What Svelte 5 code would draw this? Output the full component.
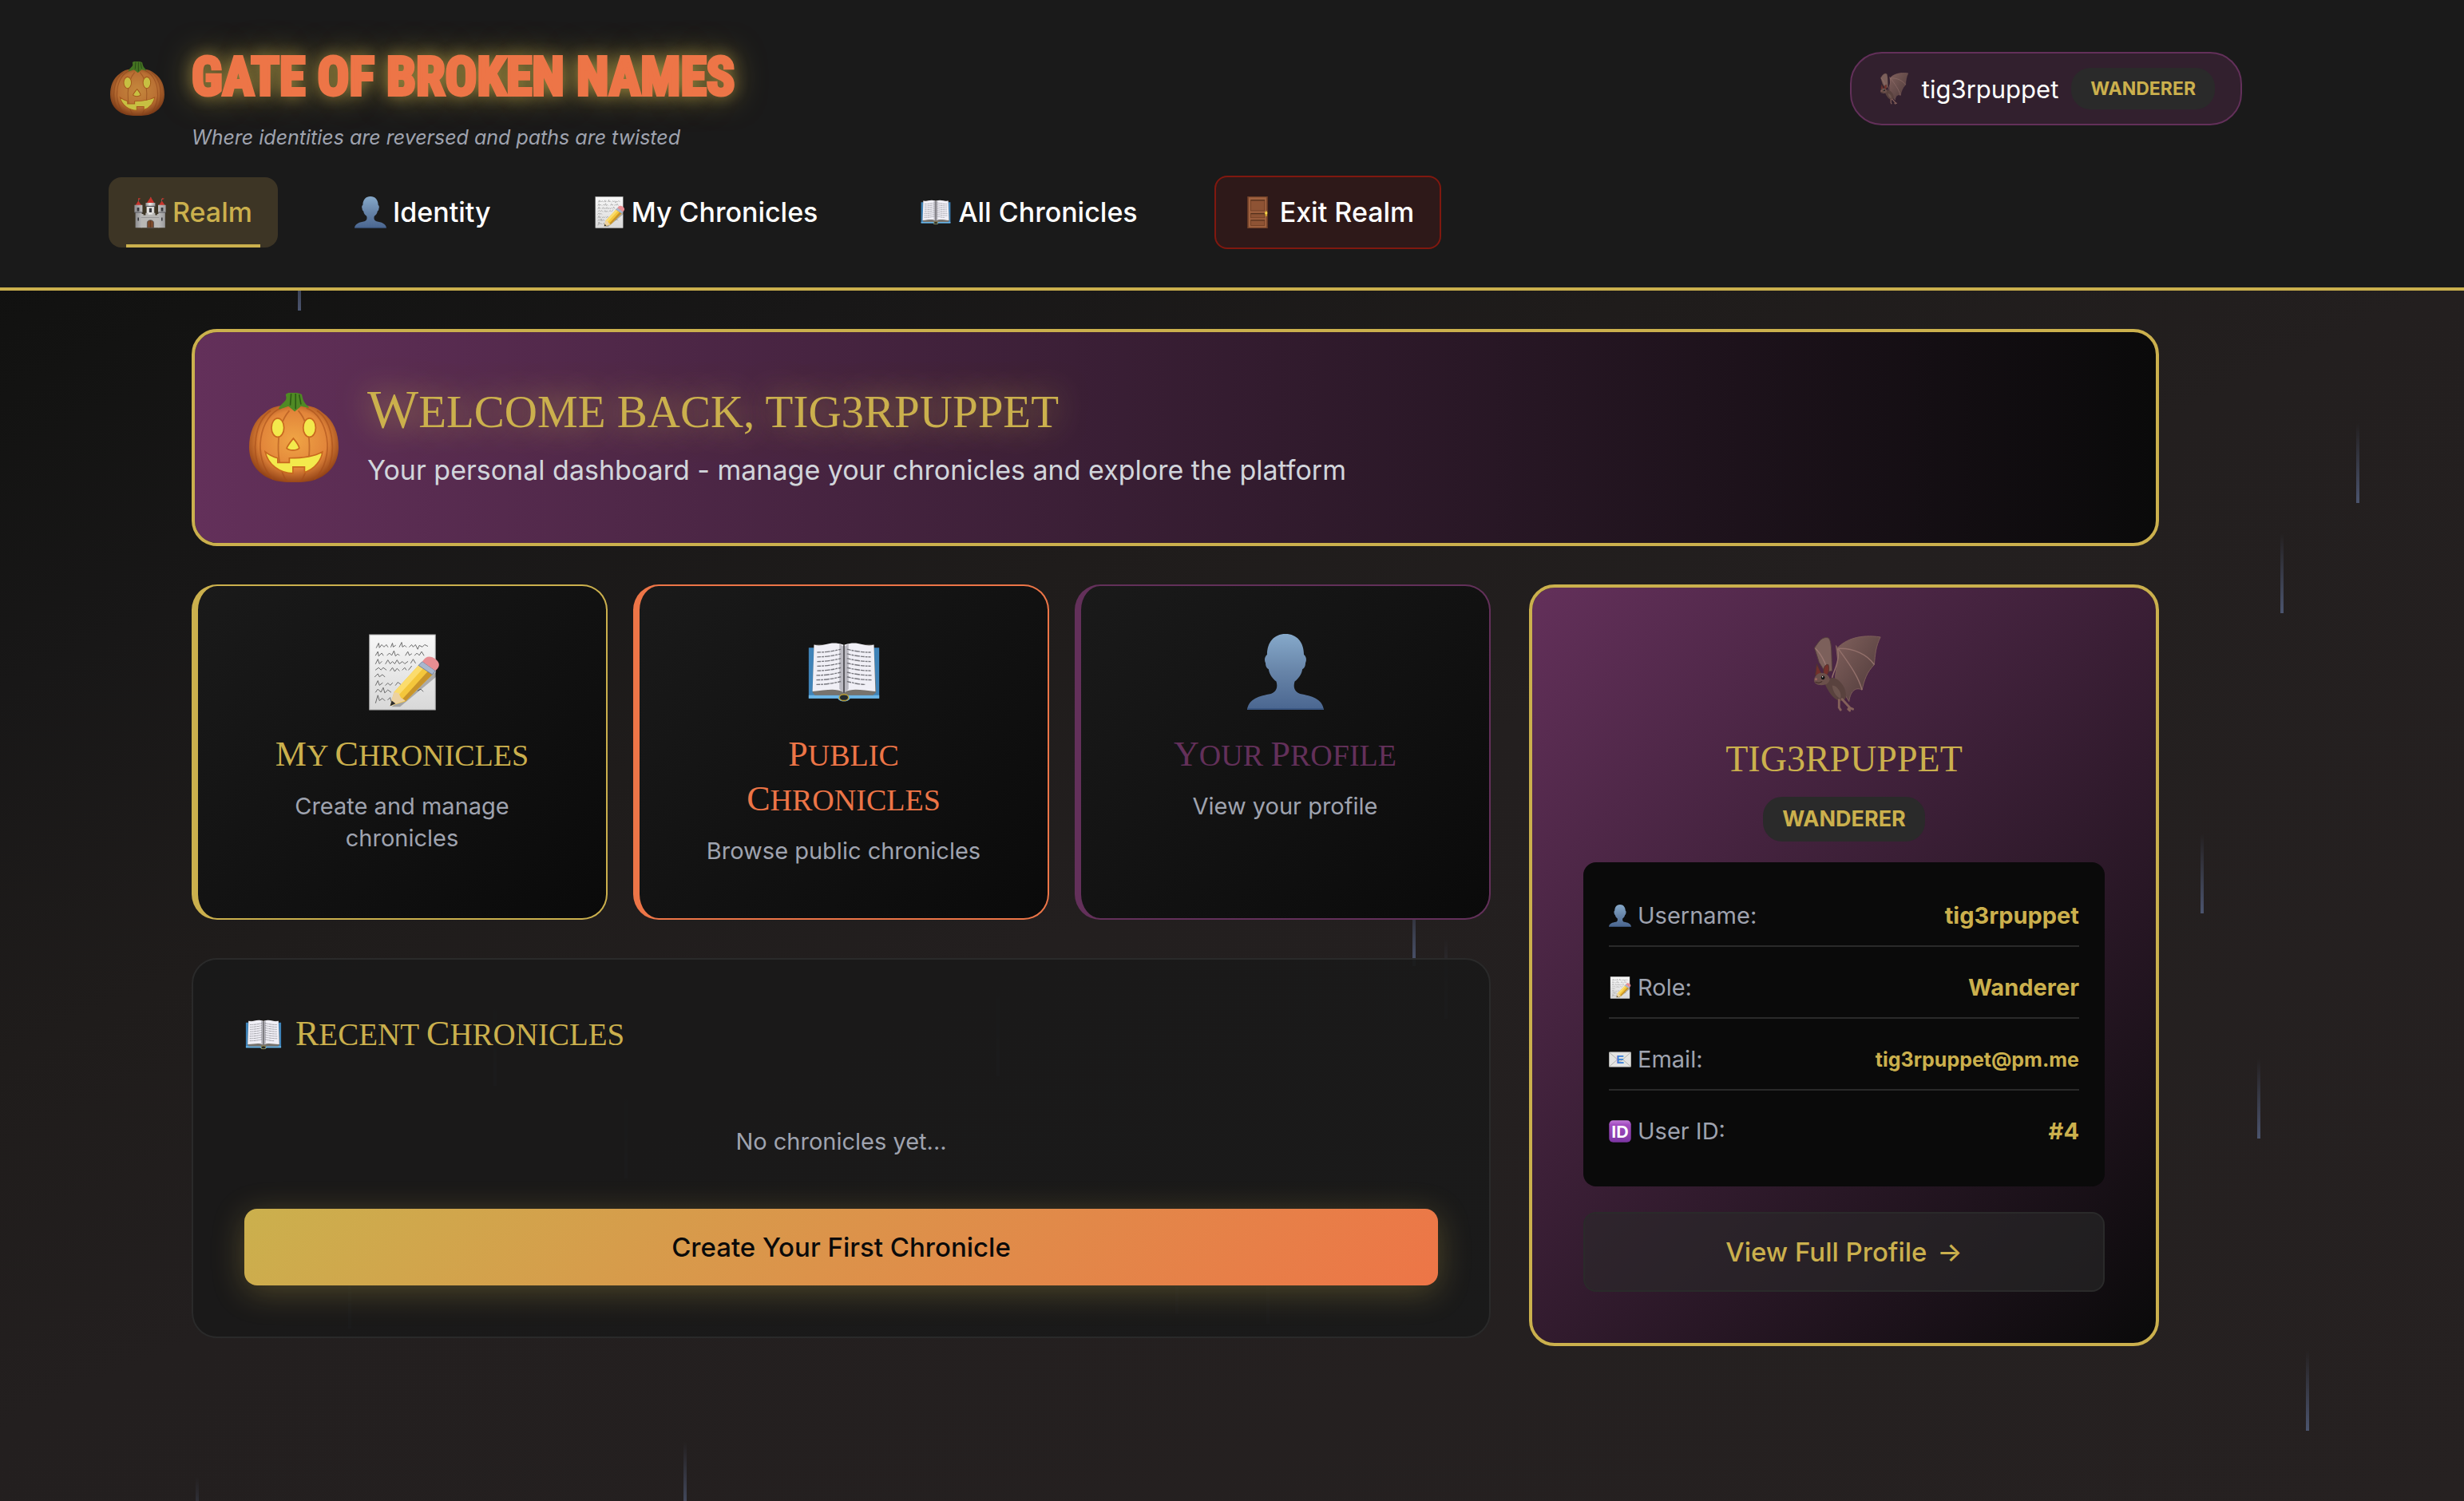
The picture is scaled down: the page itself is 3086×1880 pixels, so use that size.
<script lang="ts">
  type Drop = { x: number; y: number; faint?: boolean };

  const user = {
    name: "tig3rpuppet",
    role: "Wanderer",
    email: "tig3rpuppet@pm.me",
    id: 4
  };

  const nav = [
    { icon: "castle", label: "Realm", href: "#realm", kind: "active" },
    { icon: "bust", label: "Identity", href: "#identity", kind: "" },
    { icon: "memo", label: "My Chronicles", href: "#mine", kind: "" },
    { icon: "book", label: "All Chronicles", href: "#all", kind: "" },
    { icon: "door", label: "Exit Realm", href: "#exit", kind: "exit" }
  ];

  const cards = [
    { icon: "memo", title: "My Chronicles", text: "Create and manage chronicles", tone: "gold", href: "#mine" },
    { icon: "book", title: "Public Chronicles", text: "Browse public chronicles", tone: "orange", href: "#all" },
    { icon: "bust", title: "Your Profile", text: "View your profile", tone: "purple", href: "#identity" }
  ];

  const details = [
    { icon: "bust", label: "Username:", value: user.name, small: false },
    { icon: "memo", label: "Role:", value: user.role, small: false },
    { icon: "mail", label: "Email:", value: user.email, small: true },
    { icon: "id", label: "User ID:", value: `#${user.id}`, small: false }
  ];

  const drops: Drop[] = [
    { x: 373, y: 289 },
    { x: 2951, y: 530 },
    { x: 2856, y: 668 },
    { x: 2756, y: 1044 },
    { x: 2827, y: 1326 },
    { x: 2888, y: 1692 },
    { x: 1769, y: 1110 },
    { x: 856, y: 1806 },
    { x: 245, y: 1850 },
    { x: 1809, y: 1176, faint: true },
    { x: 1248, y: 1248, faint: true },
    { x: 618, y: 1260, faint: true },
    { x: 782, y: 1376, faint: true },
    { x: 436, y: 1564, faint: true },
    { x: 1472, y: 1546, faint: true },
    { x: 1586, y: 1558, faint: true }
  ];
</script>

{#snippet icon(name: string)}
  <svg class="icon" viewBox="0 0 100 100" aria-hidden="true"><use href="#i-{name}" /></svg>
{/snippet}

{#snippet caps(text: string)}
  {#each text.split(/([A-Z])/) as part}{#if /^[A-Z]$/.test(part)}<span class="initial">{part}</span>{:else}{part}{/if}{/each}
{/snippet}

<div class="page">
  <!-- shared artwork -->
  <svg class="defs" width="0" height="0" aria-hidden="true">
    <defs>
      <radialGradient id="g-pumpkin" cx="50%" cy="45%" r="58%">
        <stop offset="0" stop-color="#f0a545" />
        <stop offset="0.65" stop-color="#e2853a" />
        <stop offset="1" stop-color="#8c3d14" />
      </radialGradient>
      <linearGradient id="g-bust" x1="0" y1="0" x2="0" y2="1">
        <stop offset="0" stop-color="#86a9ca" />
        <stop offset="0.5" stop-color="#6784a8" />
        <stop offset="1" stop-color="#4a6690" />
      </linearGradient>
      <linearGradient id="g-paper" x1="0" y1="0" x2="0" y2="1">
        <stop offset="0" stop-color="#f8f8f8" />
        <stop offset="1" stop-color="#d8d8d8" />
      </linearGradient>
      <linearGradient id="g-wing" x1="0" y1="0" x2="1" y2="1">
        <stop offset="0" stop-color="#80605c" />
        <stop offset="1" stop-color="#4c3838" />
      </linearGradient>
      <linearGradient id="g-stone" x1="0" y1="0" x2="1" y2="0">
        <stop offset="0" stop-color="#8d8d90" />
        <stop offset="0.45" stop-color="#ecebe8" />
        <stop offset="1" stop-color="#9a9a9c" />
      </linearGradient>
      <linearGradient id="g-id" x1="0" y1="0" x2="0" y2="1">
        <stop offset="0" stop-color="#c27ad8" />
        <stop offset="0.2" stop-color="#a24cc0" />
        <stop offset="1" stop-color="#7d35a4" />
      </linearGradient>

      <symbol id="i-pumpkin" viewBox="0 0 100 100">
        <path d="M50 17C40 12 27 14 18 22C5 31 0 45 0 61C0 78 10 92 26 97C34 101 66 101 74 97C90 92 100 78 100 61C100 45 95 31 82 22C73 14 60 12 50 17Z" fill="url(#g-pumpkin)" />
        <g fill="none" stroke="#a44b18" stroke-opacity=".55" stroke-width="1.6">
          <path d="M36 17C12 25 2 72 27 97M64 17C88 25 98 72 73 97" />
          <path d="M24 20C6 32 2 66 13 88M76 20C94 32 98 66 87 88" />
          <path d="M45 20C29 38 29 78 42 99M55 20C71 38 71 78 58 99" />
        </g>
        <path d="M33 18C34 14 39 11 41 8C43 3 38 2 44 0C48 -1 57 0 59 2C60 7 61 11 66 15L67 17L58 15L51 21L44 15L35 18Z" fill="#4f8a24" />
        <path d="M47 1L46 14M52 1L52 18M56 2L58 13" stroke="#2d5916" stroke-width="1.4" fill="none" />
        <ellipse cx="32" cy="39" rx="7" ry="10.500" fill="#f3e94c" stroke="#c8681f" stroke-width="1.5" />
        <ellipse cx="67.500" cy="39" rx="7" ry="10.500" fill="#f3e94c" stroke="#c8681f" stroke-width="1.5" />
        <path d="M49.500 51C52 54 56 60 56 62C53 65 45 65 42 62C43 59 47 54 49.500 51Z" fill="#f3e94c" stroke="#c8681f" stroke-width="1.5" />
        <path d="M18 66C23 70 28 72 32 73V78H45V73C59 73 73 71 82 66C81 75 74 85 62 89V83H49V90C34 90 21 80 18 66Z" fill="#f3e94c" stroke="#c8681f" stroke-width="1.5" />
      </symbol>

      <symbol id="i-castle" viewBox="0 0 100 100">
        <path d="M52 2V16M14 8V26M86 8V26" stroke="#999" stroke-width="1.5" />
        <path d="M40 20L52 2L63 20Z M4 28L13 14L23 28Z M77 28L87 14L97 28Z" fill="#c8342c" />
        <path d="M13 5L21 7L13 11Z M87 5L95 7L87 11Z" fill="#c8342c" />
        <path d="M36 20H66V31H36Z" fill="url(#g-stone)" />
        <path d="M39 30H63V58H39Z M1 27H26V50H1Z M75 27H99V50H75Z" fill="url(#g-stone)" />
        <path d="M4 50H24V98H4Z M76 50H97V98H76Z" fill="url(#g-stone)" />
        <path d="M22 62V55H29V59H36V52H44V57H58V52H66V59H72V55H78V98H22Z" fill="#b9b8b5" />
        <path d="M22 66H78" stroke="#8b8b8d" stroke-width="2" />
        <path d="M1 50H26M75 50H99M36 31H66" stroke="#55555a" stroke-width="3" />
        <path d="M47 37H55V50H47Z M9 35H16V46H9Z M84 35H91V46H84Z M11 66H15V76H11Z M85 66H89V76H85Z" fill="#39393d" />
        <path d="M41 98V82C41 72 61 72 61 82V98Z" fill="#7a4a2b" stroke="#4c4c4f" stroke-width="2" />
        <path d="M51 75V98" stroke="#4e2b17" stroke-width="1.5" />
      </symbol>

      <symbol id="i-bust" viewBox="0 0 100 100">
        <path d="M50 0C65 0 74 11 74 27C77 29 78 34 76 38C76 43 74 45 72 46C71 53 67 58 62 62C60 69 61 75 69 78C84 81 98 84 100 99H0C2 84 16 81 31 78C39 75 40 69 38 62C33 58 29 53 28 46C26 45 24 43 24 38C22 34 23 29 26 27C26 11 35 0 50 0Z" fill="url(#g-bust)" />
        <path d="M1 98H99" stroke="#34507c" stroke-width="1.5" />
      </symbol>

      <symbol id="i-memo" viewBox="0 0 100 100">
        <rect x="7" y="1" width="86" height="98" fill="url(#g-paper)" stroke="#a5a5a5" stroke-width="1" />
        <g fill="none" stroke="#666" stroke-width="1" stroke-linecap="round" stroke-linejoin="round">
          <path d="M16 18L19 12L20 18L23 14L26 17L29 14L31 17M35 17L37 12L38 17L41 15M46 17L49 11L50 17L53 15L55 17M59 17L62 14L64 17L67 14L70 20L72 15L76 17L79 14L83 16" />
          <path d="M15 28L18 23L19 29L23 25L25 28M30 28L33 25L36 28L39 22L41 29L44 26L46 28M54 28L57 23L59 28L62 26M66 28L69 25L72 28L75 23L78 28" />
          <path d="M15 39L18 33L20 39L23 36M28 39L31 34L34 39L37 36L40 39L43 34L46 39L50 36L53 39L57 36M61 38L64 33L67 38" />
          <path d="M15 47L19 44L22 47L25 44L29 47M34 48L37 44L40 49L43 45L46 48M50 47L53 44L55 47M58 47L62 42" />
          <path d="M14 56L18 52L20 56L24 53L27 56" />
          <path d="M15 67L18 61L20 67L24 64M28 67L31 64L34 67L37 64M41 67L44 63L48 66" />
          <path d="M15 76L18 72L22 76L25 70L27 77L31 73L35 76M70 74L74 72L77 75" />
          <path d="M15 90L18 80L20 87L24 84L27 87M31 86L34 83L36 90" />
        </g>
        <path d="M36 95L84 55L98 48L94 56L47 95Z" fill="#000" opacity=".25" />
        <path d="M34 94L39 76L71 41L89 53L54 88Z" fill="#f4c73c" />
        <path d="M39 76L71 41L77 45L45 80Z" fill="#fbdc6d" />
        <path d="M50 85L83 49L89 53L54 88Z" fill="#c8942a" />
        <path d="M34 94L39 76L45 77L48 83L54 87Z" fill="#ecd2a2" />
        <path d="M34 94L36 87L41 91Z" fill="#2b2b2b" />
        <path d="M71 41L76 36L93 48L89 53Z" fill="#a9b7cd" stroke="#71809b" stroke-width="1" />
        <path d="M76 36C80 29 86 28 92 32C99 37 100 42 93 48Z" fill="#e88d92" />
      </symbol>

      <symbol id="i-book" viewBox="0 0 100 100">
        <path d="M4 18H96V84H58C56 89 44 89 42 84H4Z" fill="#3f83b8" />
        <path d="M4 80H96V84H58C56 89 44 89 42 84H4Z" fill="#6db6e6" />
        <path d="M9 76L11 14L89 14L92 76L88 80H12Z" fill="#77736d" />
        <path d="M11 14C24 18 30 8 49 14V76C38 70 26 74 9 75Z" fill="#f0eff6" />
        <path d="M89 14C76 18 70 8 51 14V76C62 70 74 74 91 75Z" fill="#f0eff6" />
        <path d="M44 13L50 17L56 13V72L50 78L44 72Z" fill="#8e8c96" opacity=".55" />
        <path d="M50 15V77" stroke="#4a4a50" stroke-width="1.6" />
        <g stroke="#77777e" stroke-width="1.4" stroke-dasharray="5 1 3 1 7 1" fill="none">
          <path d="M15 24Q30 24 46 20M15 30Q30 30 46 26M15 36Q30 36 46 32M15 42Q30 42 46 38M15 48Q30 48 46 44M14 54Q30 54 46 50M14 60Q30 60 46 56M14 66Q30 66 46 62" />
          <path d="M54 20Q70 24 85 24M54 26Q70 30 85 30M54 32Q70 36 85 36M54 38Q70 42 85 42M54 44Q70 48 85 48M54 50Q70 54 86 54M54 56Q70 60 86 60M54 62Q70 66 78 66" />
        </g>
        <ellipse cx="50" cy="83" rx="6" ry="4" fill="#242a2e" stroke="#b59a35" stroke-width="1.5" />
      </symbol>

      <symbol id="i-door" viewBox="0 0 100 100">
        <rect x="18" y="0" width="64" height="100" fill="#704028" />
        <rect x="22" y="3" width="56" height="94" fill="#a0613f" />
        <g fill="#8e5334" stroke="#6d3d24" stroke-width="2">
          <rect x="29" y="11" width="43" height="34" />
          <rect x="29" y="53" width="43" height="14" />
          <rect x="29" y="74" width="43" height="17" />
        </g>
        <path d="M29 12H72M29 54H72M29 75H72" stroke="#54301c" stroke-width="3" />
        <rect x="74" y="46" width="6" height="16" fill="#c99d2e" />
        <circle cx="77" cy="52" r="4" fill="#f5d64c" />
      </symbol>

      <symbol id="i-bat" viewBox="0 0 100 100">
        <path d="M11 16L16 9C20 3 27 1 30 4C34 10 33 28 34 46L25 48L17 35Z" fill="#7c605b" stroke="#56403d" stroke-width="1" />
        <path d="M12 17C18 22 25 34 28 46" stroke="#9a7771" stroke-width="1.500" fill="none" />
        <path d="M39 13L41 16C52 5 70 -2 97 2C91 14 90 25 89 38C79 48 76 58 73 71C66 67 58 71 56 86L40 60C35 55 42 40 41 30Z" fill="url(#g-wing)" stroke="#7d5e5a" stroke-width="1" />
        <path d="M42 17C62 16 80 25 89 38M42 17C54 34 68 52 73 71M41 17C45 32 36 46 34 55" stroke="#93706b" stroke-width="1.500" fill="none" />
        <path d="M28 58C36 50 47 60 51 71C54 82 50 87 43 85C34 82 28 71 25 64Z" fill="#59423e" />
        <path d="M34 65C41 65 47 75 45 82C39 80 35 73 34 65Z" fill="#6c544e" />
        <path d="M12 52L14 37L20 50Z M23 50C22 42 25 37 29 38C31 44 29 50 26 53Z" fill="#74302b" stroke="#4e3430" stroke-width="1" />
        <path d="M14 51C20 46 30 50 31 57C30 64 22 66 15 64C9 62 9 56 14 51Z" fill="#6b504b" />
        <circle cx="22" cy="55" r="2.500" fill="#111" />
        <circle cx="21.500" cy="54" r="0.800" fill="#fff" />
        <circle cx="13" cy="57" r="1.500" fill="#9f6660" />
        <path d="M12 61Q17 63 21 60" stroke="#3a2522" stroke-width="1" fill="none" />
        <path d="M43 84L43 94M47 83L58 95M43 94L45 97M56 94L61 96M55 96L57 98" stroke="#84605a" stroke-width="3" stroke-linecap="round" />
      </symbol>

      <symbol id="i-mail" viewBox="0 0 100 100">
        <rect x="1" y="17" width="98" height="66" rx="3" fill="#e4e4e2" stroke="#b5b5b2" stroke-width="2" />
        <path d="M3 19L46 57Q50 60 54 57L97 19M3 81L38 50M97 81L62 50" fill="none" stroke="#a9a9a6" stroke-width="3" />
        <text x="50" y="68" text-anchor="middle" class="glyph mail">E</text>
      </symbol>

      <symbol id="i-id" viewBox="0 0 100 100">
        <rect x="1" y="1" width="98" height="98" rx="18" fill="url(#g-id)" />
        <text x="50" y="77" text-anchor="middle" class="glyph">ID</text>
      </symbol>
    </defs>
  </svg>

  <div class="rain" aria-hidden="true">
    {#each drops as drop}
      <span class="drop" class:faint={drop.faint} style="left:{drop.x}px; top:{drop.y}px"></span>
    {/each}
  </div>

  <header class="header">
    <div class="header-top">
      <div class="brand">
        <span class="brand-icon">{@render icon("pumpkin")}</span>
        <div>
          <h1 class="brand-title">Gate of Broken Names</h1>
          <p class="tagline">Where identities are reversed and paths are twisted</p>
        </div>
      </div>
      <div class="user-pill">
        <span class="pill-icon">{@render icon("bat")}</span>
        <span>{user.name}</span>
        <span class="badge">{user.role}</span>
      </div>
    </div>
    <nav class="nav" aria-label="Main">
      {#each nav as item}
        <a class="nav-link {item.kind}" href={item.href}>
          {@render icon(item.icon)}
          {item.label}
        </a>
      {/each}
    </nav>
  </header>

  <main class="main">
    <section class="banner">
      <span class="banner-icon">{@render icon("pumpkin")}</span>
      <div>
        <h2 class="banner-title">{@render caps(`Welcome back, ${user.name}`)}</h2>
        <p class="banner-sub">Your personal dashboard - manage your chronicles and explore the platform</p>
      </div>
    </section>

    <div class="dashboard">
      <div class="left">
        <div class="cards">
          {#each cards as card}
            <a class="card {card.tone}" href={card.href}>
              {@render icon(card.icon)}
              <h3 class="card-title">{@render caps(card.title)}</h3>
              <p class="card-text">{card.text}</p>
            </a>
          {/each}
        </div>

        <section class="recent">
          <h3 class="recent-title">{@render icon("book")}<span>{@render caps("Recent Chronicles")}</span></h3>
          <p class="empty">No chronicles yet...</p>
          <button class="create" type="button">Create Your First Chronicle</button>
        </section>
      </div>

      <aside class="profile">
        <span class="profile-icon">{@render icon("bat")}</span>
        <h3 class="profile-name">{user.name}</h3>
        <span class="badge large">{user.role}</span>
        <dl class="details">
          {#each details as row}
            <div class="row">
              <dt>{@render icon(row.icon)}{row.label}</dt>
              <dd class:small={row.small}>{row.value}</dd>
            </div>
          {/each}
        </dl>
        <a class="full-profile" href="#identity">View Full Profile <span class="arrow">→</span></a>
      </aside>
    </div>
  </main>
</div>

<style>
  :global(body) {
    background: #262121;
  }

  .page {
    --gold: #cbb04d;
    --orange: #ed7547;
    --purple: #63305a;
    --night: #0a0a0a;
    --coal: #1a1a1a;
    --ash: #2a2a2a;
    --mist: #9fa3af;

    position: relative;
    min-height: 100vh;
    overflow: hidden;
    font-family: Inter, "Liberation Sans", sans-serif;
    font-size: 29px;
    color: #fff;
    background: linear-gradient(155deg, #0d0d0c 0%, #131312 15%, #181717 26%, #1f1c1b 40%, #231f1f 54%, #262121 100%);
  }
  .page,
  .page * {
    box-sizing: border-box;
  }
  h1,
  h2,
  h3,
  p,
  dl,
  dd {
    margin: 0;
  }
  h2,
  h3 {
    font-family: "Liberation Serif", serif;
    font-weight: 400;
    text-transform: uppercase;
  }
  a {
    text-decoration: none;
  }
  .defs {
    position: absolute;
  }
  .icon {
    display: block;
    width: 40px;
    height: 40px;
    flex: none;
  }
  .glyph {
    font-family: "Liberation Sans", sans-serif;
    font-size: 76px;
    font-weight: 700;
    fill: #fff;
  }
  .glyph.mail {
    font-size: 52px;
    fill: #3f7fd6;
  }
  .initial {
    line-height: 0;
  }

  /* Rain */
  .rain {
    position: absolute;
    inset: 0;
    pointer-events: none;
  }
  .drop {
    position: absolute;
    width: 4px;
    height: 100px;
    background: linear-gradient(transparent, #4b546e);
  }
  .drop.faint {
    opacity: 0.6;
  }

  /* Header */
  .header {
    position: relative;
    padding: 36px 278px 48px 136px;
    background: var(--coal);
    border-bottom: 4px solid var(--gold);
  }
  .header-top {
    display: flex;
    justify-content: space-between;
    align-items: center;
    margin-bottom: 34px;
  }
  .brand {
    display: flex;
    align-items: center;
    gap: 32px;
  }
  .brand-icon .icon {
    width: 72px;
    height: 68px;
    opacity: 0.8;
  }
  .brand-title {
    font-family: "Liberation Sans Narrow", "Roboto Condensed", "DejaVu Sans Condensed", sans-serif;
    font-size: 66px;
    font-weight: 700;
    line-height: 122px;
    text-transform: uppercase;
    color: var(--orange);
    -webkit-text-stroke: 4px var(--orange);
    text-shadow:
      0 0 20px rgba(203, 176, 77, 0.8),
      0 0 40px rgba(203, 176, 77, 0.7);
  }
  .tagline {
    font-size: 25px;
    font-style: italic;
    line-height: 28px;
    color: var(--mist);
  }
  .user-pill {
    display: flex;
    align-items: center;
    gap: 16px;
    padding: 18px 32px;
    font-size: 31px;
    background: #32202e;
    border: 2px solid var(--purple);
    border-radius: 40px;
  }
  .badge {
    padding: 0 24px;
    font-size: 23px;
    font-weight: 700;
    line-height: 52px;
    text-transform: uppercase;
    color: var(--gold);
    background: var(--ash);
    border-radius: 24px;
  }
  .badge.large {
    font-size: 27px;
    line-height: 56px;
  }
  .nav {
    display: flex;
    align-items: center;
    gap: 64px;
  }
  .nav-link {
    position: relative;
    display: flex;
    align-items: center;
    gap: 8px;
    padding: 20px 32px;
    font-size: 34px;
    font-weight: 500;
    line-height: 48px;
    color: #fff;
    border-radius: 16px;
  }
  .nav-link.active {
    color: var(--gold);
    background: #3d3525;
  }
  .nav-link.active::after {
    content: "";
    position: absolute;
    left: 22px;
    right: 22px;
    bottom: 0;
    height: 4px;
    background: var(--gold);
  }
  .nav-link.exit {
    background: #2e1919;
    border: 2px solid #80180f;
  }

  /* Banner */
  .main {
    position: relative;
    padding: 48px 382px 96px 240px;
  }
  .banner {
    display: flex;
    align-items: center;
    gap: 32px;
    margin-bottom: 48px;
    padding: 64px;
    background: linear-gradient(90deg, var(--purple), var(--night)) padding-box;
    border: 4px solid var(--gold);
    border-radius: 32px;
  }
  .banner-icon .icon {
    width: 120px;
    height: 112px;
  }
  .banner-title {
    margin-bottom: 10px;
    font-size: 57px;
    line-height: 72px;
    color: var(--gold);
    text-shadow: 0 0 40px rgba(203, 176, 77, 0.8);
  }
  .banner-title .initial {
    font-size: 68px;
  }
  .banner-sub {
    font-size: 34px;
    line-height: 54px;
    color: #d1d5db;
  }

  /* Dashboard */
  .dashboard {
    display: grid;
    grid-template-columns: 1627fr 789fr;
    align-items: start;
    gap: 48px;
  }
  .left {
    display: grid;
    gap: 48px;
  }
  .cards {
    display: grid;
    grid-template-columns: repeat(3, 1fr);
    gap: 32px;
  }
  .card {
    display: flex;
    flex-direction: column;
    align-items: center;
    padding: 60px 64px 64px;
    text-align: center;
    color: var(--tone);
    background: linear-gradient(135deg, var(--coal), var(--night)) padding-box;
    border: 2px solid var(--tone);
    border-left-width: 8px;
    border-radius: 32px;
  }
  .card.gold {
    --tone: var(--gold);
  }
  .card.orange {
    --tone: var(--orange);
  }
  .card.purple {
    --tone: var(--purple);
  }
  .card .icon {
    width: 96px;
    height: 96px;
    margin-bottom: 28px;
  }
  .card-title {
    margin-bottom: 16px;
    font-size: 38px;
    line-height: 56px;
  }
  .card-title .initial,
  .recent-title .initial {
    font-size: 44px;
  }
  .card-text {
    line-height: 40px;
    color: var(--mist);
  }

  .recent {
    display: flex;
    flex-direction: column;
    padding: 64px;
    background: rgba(26, 26, 26, 0.94);
    border: 2px solid var(--ash);
    border-radius: 32px;
  }
  .recent-title {
    display: flex;
    align-items: center;
    gap: 16px;
    margin-bottom: 20px;
    font-size: 39px;
    line-height: 60px;
    color: var(--gold);
  }
  .recent-title .icon {
    width: 48px;
    height: 48px;
  }
  .empty {
    padding: 64px 0;
    line-height: 40px;
    text-align: center;
    color: var(--mist);
  }
  .create {
    padding: 24px;
    font: inherit;
    font-size: 33px;
    font-weight: 500;
    line-height: 48px;
    color: var(--night);
    background: linear-gradient(135deg, var(--gold), var(--orange));
    border: 0;
    border-radius: 16px;
    box-shadow: 0 8px 40px rgba(203, 176, 77, 0.3);
  }

  /* Profile */
  .profile {
    display: flex;
    flex-direction: column;
    align-items: center;
    padding: 60px 64px 64px;
    background: linear-gradient(135deg, var(--purple), var(--night)) padding-box;
    border: 4px solid var(--gold);
    border-radius: 32px;
  }
  .profile-icon .icon {
    width: 96px;
    height: 96px;
    margin-bottom: 24px;
  }
  .profile-name {
    margin-bottom: 12px;
    font-size: 46px;
    line-height: 70px;
    color: var(--gold);
  }
  .details {
    width: 100%;
    margin: 26px 0 32px;
    padding: 16px 32px 32px;
    background: var(--night);
    border-radius: 16px;
  }
  .row {
    display: flex;
    justify-content: space-between;
    align-items: center;
    padding: 30px 0 16px;
    line-height: 42px;
    border-bottom: 2px solid var(--ash);
  }
  .row:last-child {
    border-bottom: 0;
  }
  .row dt {
    display: flex;
    align-items: center;
    gap: 8px;
    color: var(--mist);
  }
  .row .icon {
    width: 28px;
    height: 28px;
  }
  .row dd {
    font-weight: 700;
    color: var(--gold);
  }
  .row dd.small {
    font-size: 25px;
  }
  .full-profile {
    width: 100%;
    padding: 24px;
    font-size: 33px;
    font-weight: 500;
    line-height: 48px;
    text-align: center;
    color: var(--gold);
    background: rgba(42, 42, 42, 0.6);
    border: 2px solid var(--ash);
    border-radius: 16px;
  }
  .arrow {
    margin-left: 4px;
  }
</style>
